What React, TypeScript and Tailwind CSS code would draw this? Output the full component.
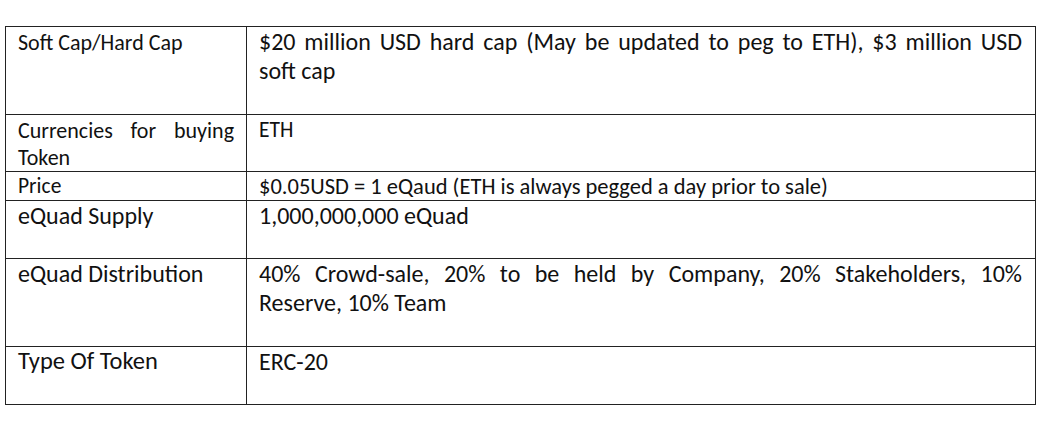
import React from 'react';

const font = { fontFamily: 'Carlito, Lato, "Open Sans", sans-serif' };

const App: React.FC = () => {
  return (
    <div className="w-[1047px] h-[428px] bg-white pt-[26px] pl-[5px]" style={font}>
      <table className="w-[1031px] border-collapse text-[#111] table-fixed">
        <colgroup>
          <col className="w-[241px]" />
          <col />
        </colgroup>
        <tbody>
          <tr className="h-[88px]">
            <td className="border border-[#222] align-top pl-3 pr-3 pt-[2px] text-[22px] leading-[27px]">
              Soft Cap/Hard Cap
            </td>
            <td className="border border-[#222] align-top pl-3 pr-[13px] pt-0 text-[24px] leading-[29px]">
              <div className="whitespace-nowrap text-justify [text-align-last:justify]">
                $20 million USD hard cap (May be updated to peg to ETH), $3 million USD
              </div>
              <div>soft cap</div>
            </td>
          </tr>
          <tr className="h-[56px]">
            <td className="border border-[#222] align-top pl-3 pr-3 pt-[2px] text-[22px] leading-[27px]">
              <div className="whitespace-nowrap [text-align-last:justify]">Currencies for buying</div>
              <div>Token</div>
            </td>
            <td className="border border-[#222] align-top pl-3 pt-[2px] text-[21.5px] leading-[27px]">ETH</td>
          </tr>
          <tr className="h-[29px]">
            <td className="border border-[#222] align-top pl-3 pt-[1px] text-[21.5px] leading-[27px]">Price</td>
            <td className="border border-[#222] align-top pl-3 pt-[1px] text-[22.5px] leading-[27px]">
              $0.05USD = 1 eQaud (ETH is always pegged a day prior to sale)
            </td>
          </tr>
          <tr className="h-[58px]">
            <td className="border border-[#222] align-top pl-3 pt-0 text-[24px] leading-[29px]">eQuad Supply</td>
            <td className="border border-[#222] align-top pl-3 pt-0 text-[24px] leading-[29px]">1,000,000,000 eQuad</td>
          </tr>
          <tr className="h-[88px]">
            <td className="border border-[#222] align-top pl-3 pt-0 text-[24px] leading-[29px]">eQuad Distribution</td>
            <td className="border border-[#222] align-top pl-3 pr-[13px] pt-0 text-[24px] leading-[29px]">
              <div className="whitespace-nowrap [text-align-last:justify]">
                40% Crowd-sale, 20% to be held by Company, 20% Stakeholders, 10%
              </div>
              <div>Reserve, 10% Team</div>
            </td>
          </tr>
          <tr className="h-[58px]">
            <td className="border border-[#222] align-top pl-3 pt-0 text-[24.5px] leading-[29px]">Type Of Token</td>
            <td className="border border-[#222] align-top pl-3 pt-0 text-[24px] leading-[29px]">ERC-20</td>
          </tr>
        </tbody>
      </table>
    </div>
  );
};

export default App;
